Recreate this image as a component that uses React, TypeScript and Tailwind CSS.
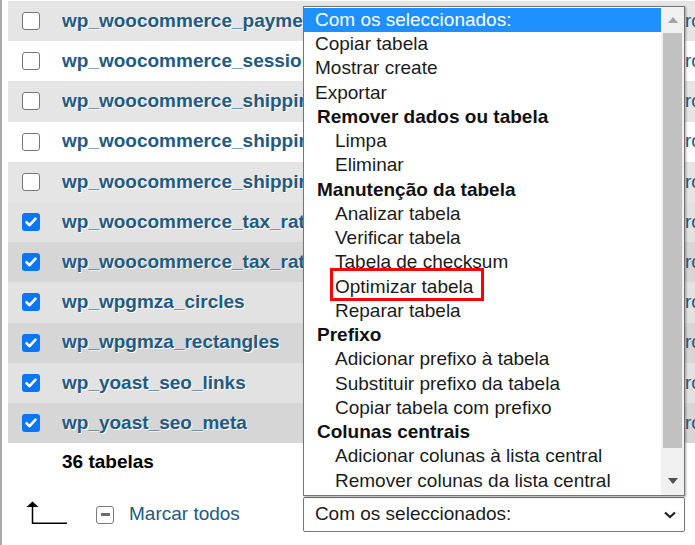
import React from 'react';

// Table rows shown behind the dropdown
interface TableRow {
  name: string;
  checked: boolean;
}

const tables: TableRow[] = [
  { name: 'wp_woocommerce_payment_tokenmeta', checked: false },
  { name: 'wp_woocommerce_sessions', checked: false },
  { name: 'wp_woocommerce_shipping_zone_locations', checked: false },
  { name: 'wp_woocommerce_shipping_zone_methods', checked: false },
  { name: 'wp_woocommerce_shipping_zones', checked: false },
  { name: 'wp_woocommerce_tax_rate_locations', checked: true },
  { name: 'wp_woocommerce_tax_rates', checked: true },
  { name: 'wp_wpgmza_circles', checked: true },
  { name: 'wp_wpgmza_rectangles', checked: true },
  { name: 'wp_yoast_seo_links', checked: true },
  { name: 'wp_yoast_seo_meta', checked: true },
];

// Dropdown entries: kind decides indent and weight
type Entry = { label: string; kind: 'selected' | 'option' | 'group' | 'sub' };

const entries: Entry[] = [
  { label: 'Com os seleccionados:', kind: 'selected' },
  { label: 'Copiar tabela', kind: 'option' },
  { label: 'Mostrar create', kind: 'option' },
  { label: 'Exportar', kind: 'option' },
  { label: 'Remover dados ou tabela', kind: 'group' },
  { label: 'Limpa', kind: 'sub' },
  { label: 'Eliminar', kind: 'sub' },
  { label: 'Manutenção da tabela', kind: 'group' },
  { label: 'Analizar tabela', kind: 'sub' },
  { label: 'Verificar tabela', kind: 'sub' },
  { label: 'Tabela de checksum', kind: 'sub' },
  { label: 'Optimizar tabela', kind: 'sub' },
  { label: 'Reparar tabela', kind: 'sub' },
  { label: 'Prefixo', kind: 'group' },
  { label: 'Adicionar prefixo à tabela', kind: 'sub' },
  { label: 'Substituir prefixo da tabela', kind: 'sub' },
  { label: 'Copiar tabela com prefixo', kind: 'sub' },
  { label: 'Colunas centrais', kind: 'group' },
  { label: 'Adicionar colunas à lista central', kind: 'sub' },
  { label: 'Remover colunas da lista central', kind: 'sub' },
];

const rowBg = (index: number, checked: boolean) => {
  const odd = index % 2 === 0;
  if (checked) return odd ? 'bg-[#d6d6d6]' : 'bg-[#e2e2e2]';
  return odd ? 'bg-[#e5e5e5]' : 'bg-white';
};

const Checkbox: React.FC<{ checked: boolean }> = ({ checked }) =>
  checked ? (
    <div className="w-[18px] h-[18px] rounded-[3px] bg-[#0a75f5] flex items-center justify-center shrink-0">
      <svg width="14" height="14" viewBox="0 0 14 14">
        <path d="M2.5 7.2 L5.6 10.2 L11.5 3.6" fill="none" stroke="#fff" strokeWidth="2.6" strokeLinecap="round" strokeLinejoin="round" />
      </svg>
    </div>
  ) : (
    <div className="w-[18px] h-[18px] rounded-[3px] border-[1.5px] border-[#767676] bg-white shrink-0" />
  );

const entryClass = (kind: Entry['kind']) => {
  switch (kind) {
    case 'selected':
      return 'bg-[#1e90ff] text-white pl-[11px]';
    case 'group':
      return 'font-bold text-[#111] pl-[13px]';
    case 'sub':
      return 'text-[#1b1b1b] pl-[31px]';
    default:
      return 'text-[#1b1b1b] pl-[11px]';
  }
};

const App: React.FC = () => {
  return (
    <div className="relative w-[695px] h-[545px] overflow-hidden bg-white border-l-2 border-[#ababab] pl-[6px] font-['Liberation_Sans',Arial,sans-serif] text-[19px]">
      {/* Table list */}
      <div className="pt-[1px]">
        {tables.map((t, i) => (
          <div key={t.name} className={`flex items-center h-[40.2px] overflow-hidden ${rowBg(i, t.checked)}`}>
            <div className="ml-[14px] shrink-0">
              <Checkbox checked={t.checked} />
            </div>
            <div className="ml-[22px] w-[280px] shrink-0 overflow-hidden whitespace-nowrap font-bold text-[#235a81] [text-shadow:1px_1px_0_#fff]">
              {t.name}
            </div>
            <div className="ml-[343px] shrink-0 whitespace-nowrap text-[#235a81]">rows</div>
          </div>
        ))}
      </div>

      {/* Table count */}
      <div className="h-[38px] flex items-center pl-[54px] font-bold text-black">36 tabelas</div>

      {/* Footer with bulk actions */}
      <div className="mt-[16px] h-[35px] flex items-center">
        <svg className="ml-[18px] mt-[-4px]" width="42" height="24" viewBox="0 0 42 24">
          <path d="M6.5 5 V22.2 H41" fill="none" stroke="#000" strokeWidth="1.5" />
          <path d="M0.5 6 L6.5 0.5 L12.5 6 Z" fill="#000" />
        </svg>
        <div className="ml-[28px] w-[18px] h-[18px] rounded-[3px] border-[1.5px] border-[#7a7a7a] bg-white flex items-center justify-center">
          <div className="w-[9px] h-[2.5px] bg-[#6b6b6b]" />
        </div>
        <span className="ml-[15px] text-[#235a81]">Marcar todos</span>
        <div className="ml-[63px] w-[382px] h-[35px] border border-[#767676] rounded-[2px] bg-white flex items-center justify-between pl-[11px] pr-[8px] text-[#1b1b1b]">
          <span>Com os seleccionados:</span>
          <svg width="12" height="8" viewBox="0 0 12 8">
            <path d="M1 1.5 L6 6 L11 1.5" fill="none" stroke="#222" strokeWidth="2.2" />
          </svg>
        </div>
      </div>

      {/* Open dropdown list */}
      <div className="absolute left-[301px] top-[6px] w-[382px] h-[490px] border border-[#767676] bg-white flex shadow-[1px_1px_2px_rgba(0,0,0,0.35)]">
        <div className="flex-1 pt-[1px]">
          {entries.map((e) => (
            <div key={e.label} className={`h-[24.26px] flex items-center whitespace-nowrap ${entryClass(e.kind)}`}>
              {e.label}
            </div>
          ))}
        </div>
        <div className="w-[23px] bg-[#f0f0f0] flex flex-col">
          <div className="h-[26px] flex items-center justify-center">
            <svg width="10" height="6" viewBox="0 0 10 6">
              <path d="M0 6 L5 0 L10 6 Z" fill="#a3a3a3" />
            </svg>
          </div>
          <div className="mx-[2px] h-[415px] bg-[#c1c1c1]" />
          <div className="flex-1" />
          <div className="h-[28px] flex items-center justify-center">
            <svg width="10" height="6" viewBox="0 0 10 6">
              <path d="M0 0 L10 0 L5 6 Z" fill="#505050" />
            </svg>
          </div>
        </div>
      </div>

      {/* Highlight annotation */}
      <div className="absolute left-[328px] top-[268px] w-[154px] h-[33px] border-[3px] border-[#ff0000]" />
    </div>
  );
};

export default App;
